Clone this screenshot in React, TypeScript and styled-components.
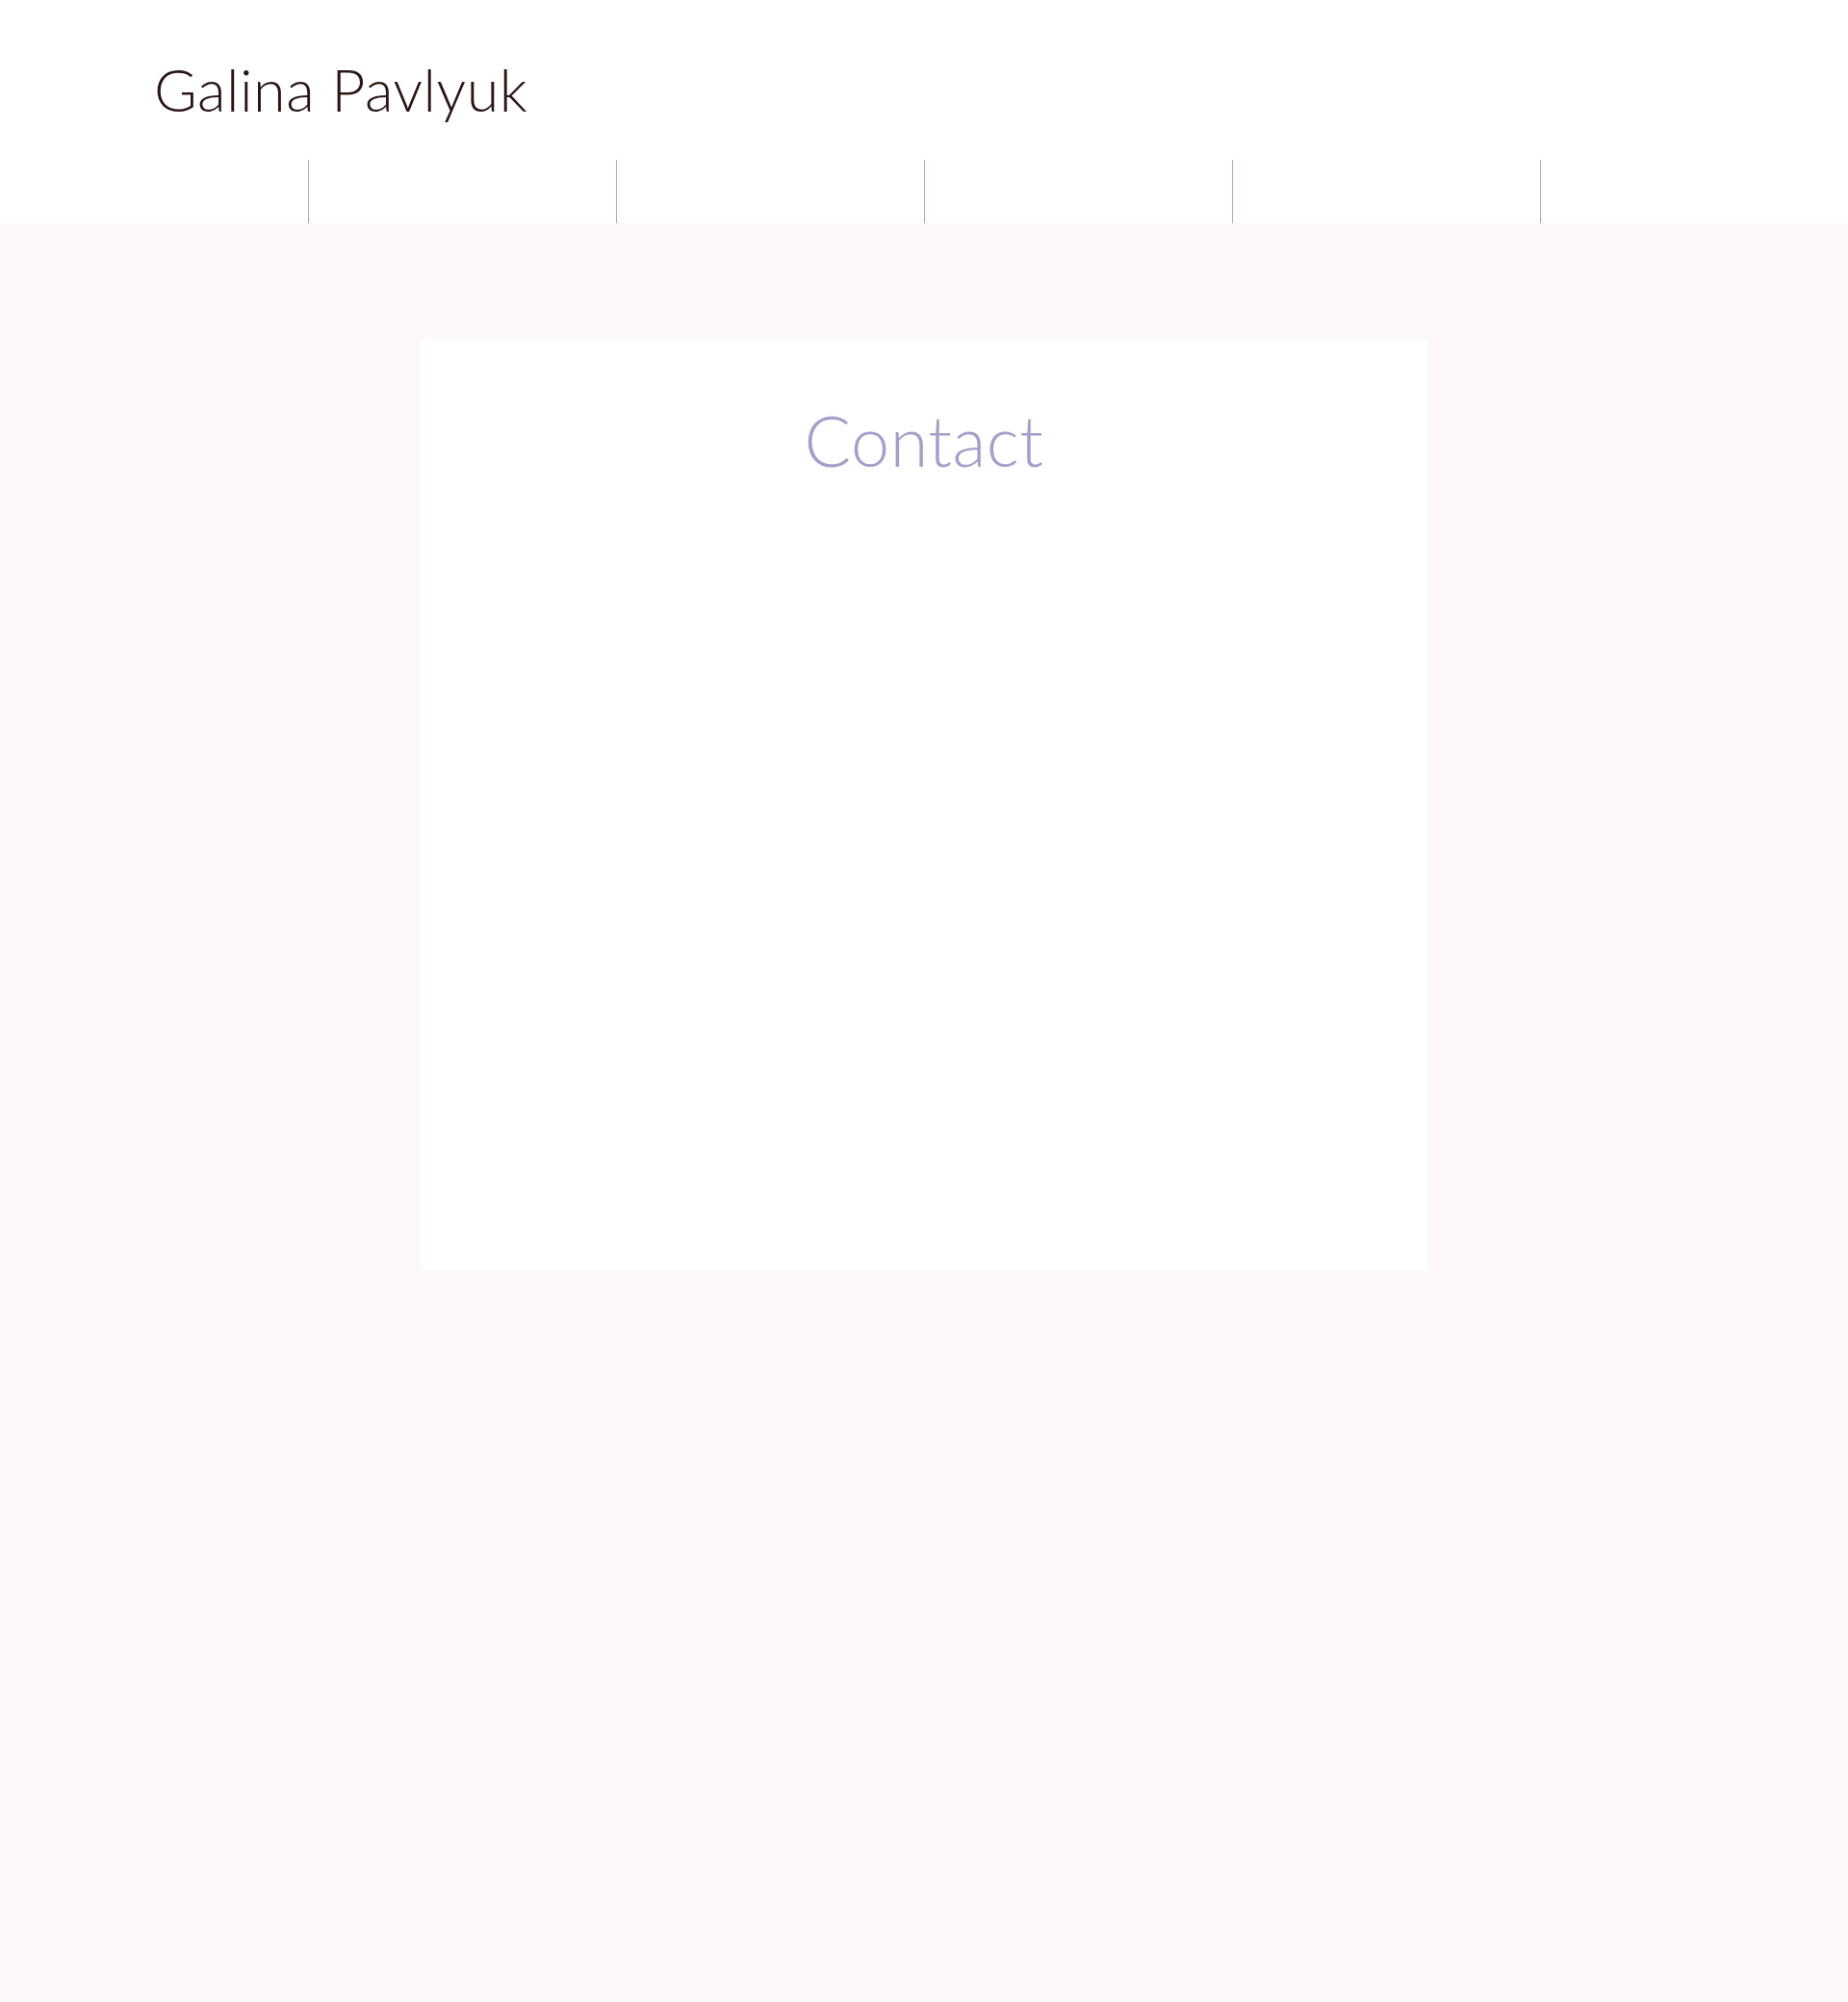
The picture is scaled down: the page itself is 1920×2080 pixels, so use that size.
import React from "react";
import styled, { createGlobalStyle } from "styled-components";

const Global = createGlobalStyle`
  html, body { margin: 0; padding: 0; }
  body { font-family: Lato, "Open Sans", sans-serif; background: #fdf7f8; }
  #root { min-height: 2080px; }
`;

const Page = styled.div`
  min-height: 2080px;
  display: flex;
  flex-direction: column;
  background: #fdf7f8;
`;

const Header = styled.header`
  background: #ffffff;
  height: 232px;
  display: flex;
  flex-direction: column;
  box-sizing: border-box;
`;

const Title = styled.h1`
  margin: 0;
  padding: 62px 0 0 160px;
  height: 166px;
  box-sizing: border-box;
  font-family: Lato, "Open Sans", sans-serif;
  font-weight: 300;
  font-size: 61px;
  line-height: 1;
  color: #2b1515;
  letter-spacing: 0.5px;
`;

const Nav = styled.nav`
  display: grid;
  grid-template-columns: repeat(6, 320px);
  height: 66px;
`;

const NavItem = styled.div<{ $first?: boolean }>`
  border-left: ${(p) => (p.$first ? "none" : "1px solid #b9a0dc")};
  box-sizing: border-box;
`;

const Main = styled.main`
  display: flex;
  justify-content: center;
  padding-top: 120px;
`;

const Card = styled.section`
  width: 1046px;
  height: 968px;
  background: #ffffff;
  display: flex;
  flex-direction: column;
  align-items: center;
`;

const Heading = styled.h2`
  margin: 0;
  padding-top: 69px;
  font-family: Lato, "Open Sans", sans-serif;
  font-weight: 300;
  font-size: 72px;
  line-height: 1;
  color: #a39fcb;
  letter-spacing: 0.5px;
`;

export default function App() {
  return (
    <>
      <Global />
      <Page>
        <Header>
          <Title>Galina Pavlyuk</Title>
          <Nav>
            {Array.from({ length: 6 }).map((_, i) => (
              <NavItem key={i} $first={i === 0} />
            ))}
          </Nav>
        </Header>
        <Main>
          <Card>
            <Heading>Contact</Heading>
          </Card>
        </Main>
      </Page>
    </>
  );
}
